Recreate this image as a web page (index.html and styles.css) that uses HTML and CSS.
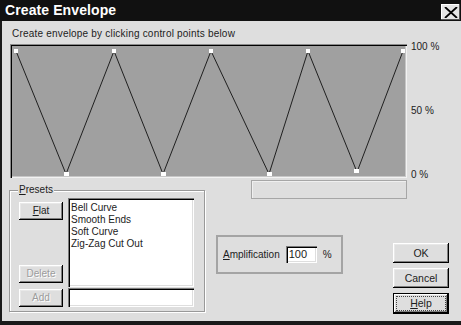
FILE: index.html
```html
<!DOCTYPE html>
<html>
<head>
    <title>Create Envelope</title>
    <link rel="stylesheet" href="styles.css">
</head>
<body>
    <div class="window">
        <div class="titlebar">
            <span class="title">Create Envelope</span>
            <span class="closeBtn">
                <svg width="14" height="11" viewBox="0 0 14 11">
                    <path d="M1 0 L13 11 M13 0 L1 11" stroke="#000" stroke-width="1.8"/>
                </svg>
            </span>
        </div>

        <div class="dialog">
            <p class="hint">Create envelope by clicking control points below</p>

            <div class="graphRow">
                <div class="graph">
                    <svg width="393" height="130" viewBox="0 0 393 130">
                        <polyline points="4,5 54,128 102,5 151,128 199,5 257,128 296,5 345,126 391,5"
                                  fill="none" stroke="#111" stroke-width="0.9"/>
                        <g fill="#fff">
                            <rect x="2" y="3" width="4" height="4"/>
                            <rect x="52" y="126" width="5" height="4"/>
                            <rect x="100" y="3" width="4" height="4"/>
                            <rect x="149" y="126" width="5" height="4"/>
                            <rect x="197" y="3" width="4" height="4"/>
                            <rect x="255" y="126" width="5" height="4"/>
                            <rect x="294" y="3" width="4" height="4"/>
                            <rect x="342" y="123" width="5" height="4"/>
                            <rect x="389" y="3" width="4" height="4"/>
                        </g>
                    </svg>
                </div>
                <div class="scale">
                    <span>100 %</span>
                    <span>50 %</span>
                    <span>0 %</span>
                </div>
            </div>

            <div class="lower">
                <div class="group presets">
                    <div class="groupLabel"><u>P</u>resets</div>
                    <div class="presetsGrid">
                        <div class="presetButtons">
                            <div class="btn"><u>F</u>lat</div>
                            <div class="btn disabled">Delete</div>
                        </div>
                        <ul class="listbox">
                            <li>Bell Curve</li>
                            <li>Smooth Ends</li>
                            <li>Soft Curve</li>
                            <li>Zig-Zag Cut Out</li>
                        </ul>
                        <div class="btn disabled addBtn">Add</div>
                        <div class="textbox nameBox"></div>
                    </div>
                </div>

                <div class="rightCol">
                    <div class="statusBox"></div>
                    <div class="ampRow">
                        <div class="ampBox">
                            <span><u>A</u>mplification</span>
                            <div class="textbox ampInput">100</div>
                            <span class="pct">%</span>
                        </div>
                        <div class="dlgButtons">
                            <div class="btn">OK</div>
                            <div class="btn">Cancel</div>
                            <div class="btn default"><span class="focus"><u>H</u>elp</span></div>
                        </div>
                    </div>
                </div>
            </div>
        </div>
    </div>
</body>
</html>
```

FILE: styles.css
```css
* {
    box-sizing: border-box;
}

body {
    margin: 0;
    font-family: "Liberation Sans", Arial, sans-serif;
    font-size: 10px;
    color: #1c1c1c;
    background-color: #dedede;
}

.window {
    width: 461px;
    height: 325px;
    overflow: hidden;
}

.titlebar {
    height: 21px;
    background-color: #111;
    display: flex;
    align-items: flex-start;
    justify-content: space-between;
}

.title {
    color: #fff;
    font-weight: bold;
    font-size: 14px;
    letter-spacing: 0.1px;
    line-height: 21px;
    padding-left: 5px;
}

.closeBtn {
    margin-top: 4px;
    margin-right: 1px;
    width: 19px;
    height: 16px;
    background-color: #e4e4e4;
    box-shadow: inset -1px -1px #555, inset 1px 1px #fff;
    display: flex;
    align-items: center;
    justify-content: center;
}

.dialog {
    height: 304px;
    border-left: 2px solid #1a1a1a;
    border-bottom: 4px solid #1a1a1a;
    padding: 7px 0 0 8px;
}

.hint {
    margin: 0 0 0 2px;
    line-height: 12px;
    letter-spacing: 0.2px;
}

/* envelope editor */
.graphRow {
    display: flex;
    align-items: flex-start;
    margin-top: 4px;
}

.graph {
    width: 397px;
    height: 134px;
    padding: 2px;
    background-color: #a0a0a0;
    box-shadow: inset 1px 1px #8a8a8a, inset 2px 2px #000, inset -1px -1px #f2f2f2, inset -2px -2px #c6c6c6;
}

.graph svg {
    display: block;
}

.scale {
    height: 140px;
    margin: -3px 0 -3px 4px;
    display: flex;
    flex-direction: column;
    justify-content: space-between;
    line-height: 12px;
}

.lower {
    display: flex;
    align-items: flex-start;
    margin-left: -1px;
}

/* group boxes */
.group {
    border: 1px solid #999;
    box-shadow: 1px 1px #fff, inset 1px 1px #fff;
}

.presets {
    width: 196px;
    height: 122px;
    margin-top: 12px;
}

.groupLabel {
    display: table;
    margin: -7px 0 0 8px;
    padding: 0 1px;
    line-height: 12px;
    background-color: #dedede;
}

.presetsGrid {
    display: grid;
    grid-template-columns: 44px 126px;
    grid-template-rows: 89px 19px;
    column-gap: 5px;
    row-gap: 1px;
    margin: 2px 0 0 9px;
}

.presetButtons {
    display: flex;
    flex-direction: column;
    justify-content: space-between;
    padding: 4px 0;
}

.listbox {
    margin: 0;
    padding: 4px 3px;
    list-style: none;
    background-color: #fff;
    line-height: 12px;
    box-shadow: inset 1px 1px #7a7a7a, inset 2px 2px #000, inset -1px -1px #fff, inset -2px -2px #dedede;
}

.textbox {
    background-color: #fff;
    box-shadow: inset 1px 1px #7a7a7a, inset 2px 2px #000, inset -1px -1px #fff, inset -2px -2px #dedede;
}

.addBtn {
    margin-top: 1px;
}

/* buttons */
.btn {
    height: 18px;
    line-height: 18px;
    text-align: center;
    background-color: #dedede;
    box-shadow: inset -1px -1px #000, inset 1px 1px #fff, inset -2px -2px #808080, inset 2px 2px #e8e8e8;
}

.btn.disabled {
    color: #9c9c9c;
    text-shadow: 1px 1px #fff;
}

.rightCol {
    display: flex;
    flex-direction: column;
}

.statusBox {
    width: 156px;
    height: 19px;
    margin: 2px 0 0 46px;
    border: 1px solid #a6a6a6;
    box-shadow: inset 1px 1px #efefef;
}

.ampRow {
    display: flex;
    align-items: flex-start;
}

.ampBox {
    width: 127px;
    height: 39px;
    margin: 36px 0 0 11px;
    border: 2px solid #a4a4a4;
    display: flex;
    align-items: center;
    padding-left: 5px;
}

.ampInput {
    width: 31px;
    height: 17px;
    margin-left: 6px;
    padding: 2px 0 0 3px;
    line-height: 12px;
    font-size: 11px;
}

.pct {
    margin-left: 6px;
}

.dlgButtons {
    width: 56px;
    margin: 44px 0 0 50px;
    display: flex;
    flex-direction: column;
    gap: 5px;
}

.dlgButtons .btn {
    height: 20px;
    line-height: 20px;
    font-size: 10.5px;
}

.dlgButtons .btn.default {
    height: 21px;
    line-height: 21px;
    padding: 3px;
    box-shadow: inset 0 0 0 1px #000, inset -2px -2px #000, inset 2px 2px #fff, inset -3px -3px #808080;
}

.focus {
    display: block;
    height: 15px;
    line-height: 13px;
    border: 1px dotted #444;
}
```
